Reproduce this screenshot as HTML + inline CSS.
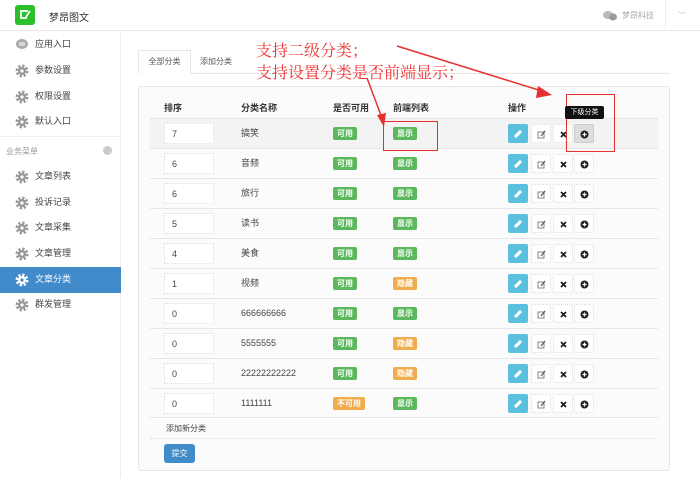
<!DOCTYPE html>
<html><head><meta charset="utf-8"><style>
*{margin:0;padding:0;box-sizing:border-box}
body{width:700px;height:478px;overflow:hidden;background:#fff;font-family:"Liberation Sans","Noto Sans CJK SC",sans-serif;font-size:9px;color:#444;position:relative}
.a{position:absolute}
.hdr{left:0;top:0;width:700px;height:31px;border-bottom:1px solid #e8e8e8;background:#fff}
.side{left:0;top:32px;width:121px;height:446px;border-right:1px solid #eee;background:#fff}
.it{position:absolute;left:15px;height:14px;line-height:14px;font-size:9px;color:#444}
.it svg{position:absolute;left:0;top:1px}
.it span{position:absolute;left:20px;white-space:nowrap}
.act{left:0;top:267px;width:121px;height:26px;background:#428bca}
.panel{left:138px;top:86px;width:532px;height:385px;border:1px solid #e5e5e5;border-radius:3px;background:#fbfbfb}
.th{font-weight:bold;color:#333;font-size:9px}
.row{left:150px;width:508px;height:30px;border-top:1px solid #e6e6e6}
.inp{position:absolute;left:14px;top:4px;width:50px;height:21px;border:1px dotted #ddd;background:#fff;padding-left:7px;line-height:20px;font-size:9px}
.nm{position:absolute;left:91px;top:0;line-height:29px;font-size:9px}
.lb{position:absolute;top:8px;height:13px;line-height:13px;color:#fff;font-size:8px;font-weight:bold;border-radius:2px;padding:0 4px}
.g{background:#5cb85c}.o{background:#f0ad4e}
.bt{position:absolute;top:5px;width:20px;height:19px;border:1px dotted #ddd;background:#fff;border-radius:2px;text-align:center;line-height:18px;font-size:8px;color:#333}
.bt svg{position:absolute;left:5px;top:5px}
.red{color:#f03030;font-family:"Noto Serif CJK SC","Liberation Serif",serif;font-size:16px;white-space:nowrap}
</style></head><body>
<svg width="0" height="0" style="position:absolute"><defs>
<g id="gr"><circle cx="7" cy="7" r="4.7" fill="none" stroke="currentColor" stroke-width="3.5" stroke-dasharray="2.1 1.6"/><circle cx="7" cy="7" r="4" fill="currentColor"/><circle cx="7" cy="7" r="1.6" fill="#fff"/></g>
<g id="ln"><path d="M2 7L4 5M5 4L7 2M3 8L8 3" stroke="#fff" stroke-width="1.6" fill="none" stroke-linecap="round"/></g>
<g id="ed"><rect x="1" y="2" width="6" height="6" fill="none" stroke="#777" stroke-width="0.9"/><path d="M4 6L8 1" stroke="#555" stroke-width="1.2"/></g>
<g id="x"><path d="M2 2L7 7M7 2L2 7" stroke="#222" stroke-width="1.8"/></g>
<g id="pl"><circle cx="4.5" cy="4.5" r="4" fill="#222"/><path d="M2.5 4.5h4M4.5 2.5v4" stroke="#fff" stroke-width="1.2"/></g>
</defs></svg>
<div class="a hdr"></div>
<div class="a" style="left:15px;top:5px;width:20px;height:20px;background:#2bc02b;border-radius:3px"><svg width="20" height="20"><path d="M5 6h8M6 6v7h6M11 12l4-6" stroke="#fff" stroke-width="1.8" fill="none"/></svg></div>
<div class="a" style="left:49px;top:9px;font-size:10px;color:#333">梦昂图文</div>
<div class="a" style="left:603px;top:10px;width:14px;height:10px"><svg width="14" height="11"><ellipse cx="5" cy="5" rx="5" ry="4" fill="#bbb"/><ellipse cx="10" cy="7" rx="4" ry="3.5" fill="#999"/></svg></div>
<div class="a" style="left:622px;top:10px;font-size:8px;color:#aaa">梦昂科技</div>
<div class="a" style="left:665px;top:0;width:1px;height:31px;background:#eee"></div>
<div class="a" style="left:678px;top:10px;font-size:8px;color:#bbb">﹀</div>
<div class="a side"></div>
<div class="a" style="left:0;top:136px;width:121px;border-top:1px solid #eee"></div>
<div class="a" style="left:6px;top:146px;font-size:8px;color:#999">业务菜单</div>
<div class="a" style="left:103px;top:146px;width:9px;height:9px;border-radius:50%;background:#ccc"></div>
<div class="a act"></div>
<div class="it" style="top:37px"><svg width="14" height="12"><ellipse cx="7" cy="6" rx="6" ry="5" fill="#aaa"/><path d="M4 5h6M4 7h6" stroke="#fff"/></svg><span>应用入口</span></div>
<div class="it" style="top:63px"><svg width="14" height="14" style="color:#999"><use href="#gr"/></svg><span>参数设置</span></div>
<div class="it" style="top:89px"><svg width="14" height="14" style="color:#999"><use href="#gr"/></svg><span>权限设置</span></div>
<div class="it" style="top:114px"><svg width="14" height="14" style="color:#999"><use href="#gr"/></svg><span>默认入口</span></div>
<div class="it" style="top:169px"><svg width="14" height="14" style="color:#999"><use href="#gr"/></svg><span>文章列表</span></div>
<div class="it" style="top:195px"><svg width="14" height="14" style="color:#999"><use href="#gr"/></svg><span>投诉记录</span></div>
<div class="it" style="top:220px"><svg width="14" height="14" style="color:#999"><use href="#gr"/></svg><span>文章采集</span></div>
<div class="it" style="top:246px"><svg width="14" height="14" style="color:#999"><use href="#gr"/></svg><span>文章管理</span></div>
<div class="it" style="top:272px;color:#fff"><svg width="14" height="14"><circle cx="7" cy="7" r="4.7" fill="none" stroke="#fff" stroke-width="3.5" stroke-dasharray="2.1 1.6"/><circle cx="7" cy="7" r="4" fill="#fff"/><circle cx="7" cy="7" r="1.6" fill="#428bca"/></svg><span>文章分类</span></div>
<div class="it" style="top:297px"><svg width="14" height="14" style="color:#999"><use href="#gr"/></svg><span>群发管理</span></div>

<div class="a" style="left:138px;top:73px;width:532px;border-top:1px solid #e5e5e5"></div>
<div class="a" style="left:138px;top:50px;width:53px;height:24px;border:1px solid #e5e5e5;border-bottom:1px solid #fff;background:#fff;text-align:center;line-height:22px;font-size:8px;color:#555">全部分类</div>
<div class="a" style="left:200px;top:56px;font-size:8px;color:#555">添加分类</div>
<div class="a panel"></div>
<div class="a th" style="left:164px;top:101px">排序</div>
<div class="a th" style="left:241px;top:101px">分类名称</div>
<div class="a th" style="left:333px;top:101px">是否可用</div>
<div class="a th" style="left:393px;top:101px">前端列表</div>
<div class="a th" style="left:508px;top:101px">操作</div>

<div class="a row" style="top:118px;background:#f3f3f3"><div class="inp">7</div><div class="nm">搞笑</div><div class="lb g" style="left:183px">可用</div><div class="lb g" style="left:243px">显示</div><div class="bt" style="left:358px;background:#5bc0de;border:none"><svg width="10" height="10"><use href="#ln"/></svg></div><div class="bt" style="left:381px"><svg width="10" height="10"><use href="#ed"/></svg></div><div class="bt" style="left:403px"><svg width="10" height="10"><use href="#x"/></svg></div><div class="bt" style="left:424px;background:#ddd;border:1px solid #ccc"><svg width="10" height="10"><use href="#pl"/></svg></div></div>
<div class="a row" style="top:148px"><div class="inp">6</div><div class="nm">音频</div><div class="lb g" style="left:183px">可用</div><div class="lb g" style="left:243px">显示</div><div class="bt" style="left:358px;background:#5bc0de;border:none"><svg width="10" height="10"><use href="#ln"/></svg></div><div class="bt" style="left:381px"><svg width="10" height="10"><use href="#ed"/></svg></div><div class="bt" style="left:403px"><svg width="10" height="10"><use href="#x"/></svg></div><div class="bt" style="left:424px"><svg width="10" height="10"><use href="#pl"/></svg></div></div>
<div class="a row" style="top:178px"><div class="inp">6</div><div class="nm">旅行</div><div class="lb g" style="left:183px">可用</div><div class="lb g" style="left:243px">显示</div><div class="bt" style="left:358px;background:#5bc0de;border:none"><svg width="10" height="10"><use href="#ln"/></svg></div><div class="bt" style="left:381px"><svg width="10" height="10"><use href="#ed"/></svg></div><div class="bt" style="left:403px"><svg width="10" height="10"><use href="#x"/></svg></div><div class="bt" style="left:424px"><svg width="10" height="10"><use href="#pl"/></svg></div></div>
<div class="a row" style="top:208px"><div class="inp">5</div><div class="nm">读书</div><div class="lb g" style="left:183px">可用</div><div class="lb g" style="left:243px">显示</div><div class="bt" style="left:358px;background:#5bc0de;border:none"><svg width="10" height="10"><use href="#ln"/></svg></div><div class="bt" style="left:381px"><svg width="10" height="10"><use href="#ed"/></svg></div><div class="bt" style="left:403px"><svg width="10" height="10"><use href="#x"/></svg></div><div class="bt" style="left:424px"><svg width="10" height="10"><use href="#pl"/></svg></div></div>
<div class="a row" style="top:238px"><div class="inp">4</div><div class="nm">美食</div><div class="lb g" style="left:183px">可用</div><div class="lb g" style="left:243px">显示</div><div class="bt" style="left:358px;background:#5bc0de;border:none"><svg width="10" height="10"><use href="#ln"/></svg></div><div class="bt" style="left:381px"><svg width="10" height="10"><use href="#ed"/></svg></div><div class="bt" style="left:403px"><svg width="10" height="10"><use href="#x"/></svg></div><div class="bt" style="left:424px"><svg width="10" height="10"><use href="#pl"/></svg></div></div>
<div class="a row" style="top:268px"><div class="inp">1</div><div class="nm">视频</div><div class="lb g" style="left:183px">可用</div><div class="lb o" style="left:243px">隐藏</div><div class="bt" style="left:358px;background:#5bc0de;border:none"><svg width="10" height="10"><use href="#ln"/></svg></div><div class="bt" style="left:381px"><svg width="10" height="10"><use href="#ed"/></svg></div><div class="bt" style="left:403px"><svg width="10" height="10"><use href="#x"/></svg></div><div class="bt" style="left:424px"><svg width="10" height="10"><use href="#pl"/></svg></div></div>
<div class="a row" style="top:298px"><div class="inp">0</div><div class="nm">666666666</div><div class="lb g" style="left:183px">可用</div><div class="lb g" style="left:243px">显示</div><div class="bt" style="left:358px;background:#5bc0de;border:none"><svg width="10" height="10"><use href="#ln"/></svg></div><div class="bt" style="left:381px"><svg width="10" height="10"><use href="#ed"/></svg></div><div class="bt" style="left:403px"><svg width="10" height="10"><use href="#x"/></svg></div><div class="bt" style="left:424px"><svg width="10" height="10"><use href="#pl"/></svg></div></div>
<div class="a row" style="top:328px"><div class="inp">0</div><div class="nm">5555555</div><div class="lb g" style="left:183px">可用</div><div class="lb o" style="left:243px">隐藏</div><div class="bt" style="left:358px;background:#5bc0de;border:none"><svg width="10" height="10"><use href="#ln"/></svg></div><div class="bt" style="left:381px"><svg width="10" height="10"><use href="#ed"/></svg></div><div class="bt" style="left:403px"><svg width="10" height="10"><use href="#x"/></svg></div><div class="bt" style="left:424px"><svg width="10" height="10"><use href="#pl"/></svg></div></div>
<div class="a row" style="top:358px"><div class="inp">0</div><div class="nm">22222222222</div><div class="lb g" style="left:183px">可用</div><div class="lb o" style="left:243px">隐藏</div><div class="bt" style="left:358px;background:#5bc0de;border:none"><svg width="10" height="10"><use href="#ln"/></svg></div><div class="bt" style="left:381px"><svg width="10" height="10"><use href="#ed"/></svg></div><div class="bt" style="left:403px"><svg width="10" height="10"><use href="#x"/></svg></div><div class="bt" style="left:424px"><svg width="10" height="10"><use href="#pl"/></svg></div></div>
<div class="a row" style="top:388px;border-bottom:1px solid #e6e6e6"><div class="inp">0</div><div class="nm">1111111</div><div class="lb o" style="left:183px">不可用</div><div class="lb g" style="left:243px">显示</div><div class="bt" style="left:358px;background:#5bc0de;border:none"><svg width="10" height="10"><use href="#ln"/></svg></div><div class="bt" style="left:381px"><svg width="10" height="10"><use href="#ed"/></svg></div><div class="bt" style="left:403px"><svg width="10" height="10"><use href="#x"/></svg></div><div class="bt" style="left:424px"><svg width="10" height="10"><use href="#pl"/></svg></div></div>
<div class="a" style="left:166px;top:423px;font-size:8px;color:#444">添加新分类</div>
<div class="a" style="left:150px;top:438px;width:508px;border-top:1px dotted #ddd"></div>
<div class="a" style="left:164px;top:444px;width:31px;height:19px;background:#428bca;border-radius:3px;color:#fff;font-size:8px;text-align:center;line-height:19px">提交</div>

<div class="a red" style="left:256px;top:38px">支持二级分类；</div>
<div class="a red" style="left:256px;top:60px">支持设置分类是否前端显示；</div>
<div class="a" style="left:383px;top:121px;width:55px;height:30px;border:1.5px solid #e53030"></div>
<div class="a" style="left:566px;top:94px;width:49px;height:58px;border:1.5px solid #e53030"></div>
<div class="a" style="left:565px;top:106px;width:39px;height:13px;background:#111;color:#fff;font-size:7px;line-height:13px;text-align:center;border-radius:2px">下级分类</div>
<svg class="a" style="left:0;top:0" width="700" height="478"><path d="M367 78 L382 118" stroke="#e53030" stroke-width="1.5"/><path d="M377 115 L384 127 L386 113Z" fill="#e53030"/><path d="M397 46 L545 92" stroke="#e53030" stroke-width="1.5"/><path d="M538 86 L552 95 L536 98Z" fill="#e53030"/></svg>
</body></html>
